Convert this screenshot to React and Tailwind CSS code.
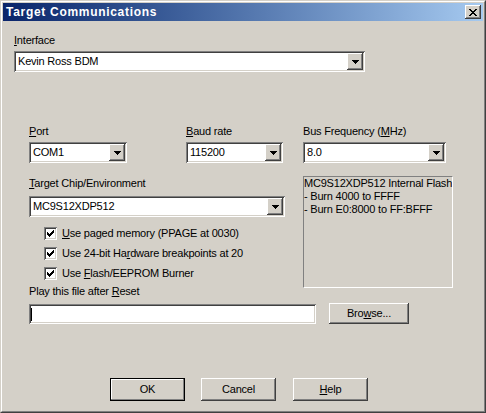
import React from 'react';

const raised =
  'bg-[#d4d0c8] shadow-[inset_-1px_-1px_#404040,inset_1px_1px_#ffffff,inset_-2px_-2px_#808080]';
const sunken =
  'shadow-[inset_1px_1px_#808080,inset_-1px_-1px_#ffffff,inset_2px_2px_#404040,inset_-2px_-2px_#d4d0c8]';

const xPixels = [
  '##....##',
  '.##..##.',
  '..####..',
  '...##...',
  '..####..',
  '.##..##.',
  '##....##',
];

const CloseGlyph = () => (
  <svg width="8" height="7" viewBox="0 0 8 7" shapeRendering="crispEdges">
    {xPixels.map((row, y) =>
      row.split('').map((c, x) =>
        c === '#' ? <rect key={`${x}-${y}`} x={x} y={y} width="1" height="1" fill="#000" /> : null
      )
    )}
  </svg>
);

const Arrow = () => (
  <svg width="7" height="4" viewBox="0 0 7 4" shapeRendering="crispEdges">
    <path d="M0 0h7v1h-1v1h-1v1h-1v1h-1v-1h-1v-1h-1v-1h-1z" fill="#000" />
  </svg>
);

const Combo = ({ value, className }) => (
  <div className={`h-[21px] bg-white ${sunken} flex items-center p-[2px] ${className}`}>
    <span className="flex-1 pl-[2px] whitespace-nowrap overflow-hidden">{value}</span>
    <div className={`w-[16px] h-[17px] flex items-center justify-center ${raised}`}>
      <Arrow />
    </div>
  </div>
);

const Check = ({ children }) => (
  <div className="flex items-center h-[13px] ml-[30px]">
    <div className={`w-[13px] h-[13px] bg-white ${sunken} p-[3px]`}>
      <svg width="7" height="7" viewBox="0 0 7 7" shapeRendering="crispEdges" className="block">
        <path d="M6 0h1v3h-1v1h-1v1h-1v1h-1v1h-1v-1h-1v-1h-1v-3h1v1h1v1h1v-1h1v-1h1v-1h1z" fill="#000" />
      </svg>
    </div>
    <span className="ml-[5px] whitespace-nowrap">{children}</span>
  </div>
);

const Button = ({ children, isDefault, className }) =>
  isDefault ? (
    <div className={`w-[75px] h-[23px] border border-black ${className}`}>
      <div className="h-full flex items-center justify-center bg-[#d4d0c8] shadow-[inset_-1px_-1px_#808080,inset_1px_1px_#ffffff]">
        {children}
      </div>
    </div>
  ) : (
    <div className={`w-[75px] h-[23px] flex items-center justify-center ${raised} ${className}`}>
      {children}
    </div>
  );

export default function App() {
  return (
    <div className="w-[486px] h-[413px] bg-[#d4d0c8] font-['Liberation_Sans',Arial,sans-serif] text-[11px] leading-[13px] tracking-[-0.2px] text-black border border-t-[#d4d0c8] border-l-[#d4d0c8] border-r-[#404040] border-b-[#404040]">
      <div className="h-full border border-t-white border-l-white border-r-[#808080] border-b-[#808080] p-px flex flex-col">
        <div className="h-[18px] flex items-center bg-linear-to-r from-[#0a246a] to-[#a6caf0]">
          <span className="pl-[3px] flex-1 text-white font-bold text-[12px] tracking-[0.7px]">
            Target Communications
          </span>
          <div className={`w-[16px] h-[14px] mr-[2px] flex items-center justify-center ${raised}`}>
            <CloseGlyph />
          </div>
        </div>

        <div className="flex-1 flex flex-col pl-[11px]">
          <div className="mt-[13px]">
            <u>I</u>nterface
          </div>
          <Combo value="Kevin Ross BDM" className="mt-[4px] w-[351px]" />

          <div className="mt-[53px] flex ml-[15px]">
            <div className="w-[98px]">
              <u>P</u>ort
            </div>
            <div className="ml-[59px] w-[97px]">
              <u>B</u>aud rate
            </div>
            <div className="ml-[20px] w-[143px]">
              Bus Frequency (<u>M</u>Hz)
            </div>
          </div>
          <div className="mt-[4px] flex ml-[15px]">
            <Combo value="COM1" className="w-[98px]" />
            <Combo value="115200" className="ml-[59px] w-[97px]" />
            <Combo value="8.0" className="ml-[20px] w-[143px]" />
          </div>

          <div className="mt-[13px] flex items-start">
            <div className="flex flex-col w-[271px]">
              <div className="mt-px ml-[15px]">
                <u>T</u>arget Chip/Environment
              </div>
              <Combo value="MC9S12XDP512" className="mt-[6px] ml-[15px] w-[256px]" />
              <div className="mt-[10px] flex flex-col gap-[7px]">
                <Check>
                  <u>U</u>se paged memory (PPAGE at 0030)
                </Check>
                <Check>
                  Use 24-bit Ha<u>r</u>dware breakpoints at 20
                </Check>
                <Check>
                  Use <u>F</u>lash/EEPROM Burner
                </Check>
              </div>
              <div className="mt-[5px] ml-[15px]">
                Play this file after <u>R</u>eset
              </div>
            </div>
            <div className="ml-[18px] w-[150px] h-[112px] border border-t-[#808080] border-l-[#808080] border-r-white border-b-white whitespace-nowrap overflow-hidden">
              <div>MC9S12XDP512 Internal Flash</div>
              <div>- Burn 4000 to FFFF</div>
              <div>- Burn E0:8000 to FF:BFFF</div>
            </div>
          </div>

          <div className="mt-[5px] flex items-start ml-[15px]">
            <div className={`mt-px w-[287px] h-[20px] bg-white ${sunken} flex items-center pl-[2px]`}>
              <span className="w-px h-[13px] bg-black" />
            </div>
            <div className={`ml-[13px] w-[80px] h-[21px] flex items-center justify-center ${raised}`}>
              Bro<u>w</u>se...
            </div>
          </div>

          <div className="mt-[54px] flex">
            <Button isDefault className="ml-[96px]">OK</Button>
            <Button className="ml-[16px]">Cancel</Button>
            <Button className="ml-[17px]">
              <span>
                <u>H</u>elp
              </span>
            </Button>
          </div>
        </div>
      </div>
    </div>
  );
}
